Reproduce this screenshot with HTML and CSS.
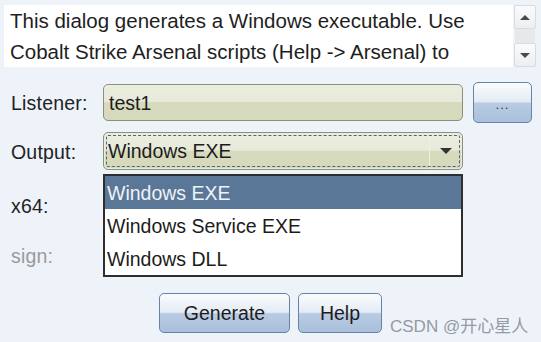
FILE: index.html
```html
<!DOCTYPE html>
<html lang="en">

<head>
    <meta charset="UTF-8">
    <title>Windows Executable</title>
    <link rel="stylesheet" href="styles.css">
</head>

<body>
    <div class="dialog">
        <!-- description -->
        <div class="desc">
            <div class="desc-text">This dialog generates a Windows executable. Use Cobalt Strike Arsenal scripts (Help -&gt; Arsenal) to</div>
            <div class="scrollbar">
                <div class="scroll-btn"><span class="arrow-up"></span></div>
                <div class="scroll-track"></div>
                <div class="scroll-btn"><span class="arrow-down"></span></div>
            </div>
        </div>

        <div class="row row-listener">
            <div class="label">Listener:</div>
            <div class="field">test1</div>
            <button class="btn btn-more">...</button>
        </div>

        <div class="row row-output">
            <div class="label">Output:</div>
            <div class="combo-wrap">
                <div class="combo">
                    <div class="combo-value">Windows EXE</div>
                    <div class="combo-arrow"><span class="arrow-down dark"></span></div>
                </div>
                <!-- open popup list -->
                <ul class="combo-list">
                    <li class="selected">Windows EXE</li>
                    <li>Windows Service EXE</li>
                    <li>Windows DLL</li>
                </ul>
            </div>
        </div>

        <div class="row row-x64">
            <div class="label">x64:</div>
        </div>

        <div class="row row-sign">
            <div class="label disabled">sign:</div>
        </div>

        <div class="buttons">
            <button class="btn btn-generate">Generate</button>
            <button class="btn btn-help">Help</button>
        </div>
    </div>

    <div class="watermark">CSDN @开心星人</div>
</body>

</html>
```

FILE: styles.css
```css
body {
    margin: 0;
    height: 342px;
    background-color: #eef2f9;
    font-family: "Liberation Sans", Arial, sans-serif;
    color: #222222;
    overflow: hidden;
}

.dialog {
    padding: 5px 0 0 4px;
}

.desc {
    display: flex;
    height: 62px;
}

.desc-text {
    width: 503px;
    height: 62px;
    padding: 0 0 0 6px;
    background-color: #ffffff;
    font-size: 20.5px;
    line-height: 31px;
    overflow: hidden;
    color: #1e1e1e;
}

.scrollbar {
    width: 22px;
    margin-left: 1px;
    display: flex;
    flex-direction: column;
}

.scroll-btn {
    height: 22px;
    border: 1px solid #d7dbe2;
    border-radius: 2px;
    background: linear-gradient(#fbfbfc, #eceef1);
    display: flex;
    justify-content: center;
    align-items: center;
}

.scroll-track {
    flex: 1;
    background-color: #e6e8ec;
    margin: 0 1px;
}

.arrow-up {
    width: 0;
    height: 0;
    border-left: 5px solid transparent;
    border-right: 5px solid transparent;
    border-bottom: 5px solid #4a4a4a;
}

.arrow-down {
    width: 0;
    height: 0;
    border-left: 5px solid transparent;
    border-right: 5px solid transparent;
    border-top: 5px solid #4a4a4a;
}

.arrow-down.dark {
    border-left-width: 6px;
    border-right-width: 6px;
    border-top: 6px solid #333333;
}

.row {
    display: flex;
    align-items: center;
}

.label {
    width: 92px;
    padding-left: 7px;
    font-size: 19.5px;
    letter-spacing: 0.2px;
    padding-top: 3px;
    color: #222222;
}

.label.disabled {
    color: #9a9a9a;
}

.row-listener {
    margin-top: 14px;
    height: 42px;
}

.field {
    width: 353px;
    height: 35px;
    padding-left: 5px;
    border: 1px solid #8d9079;
    border-radius: 5px;
    background: linear-gradient(#ebeedf 0%, #e7eadb 48%, #d7dabd 50%, #d6d9bc 100%);
    font-size: 19.5px;
    line-height: 36px;
    color: #1c1c1c;
}

.btn {
    font-family: "Liberation Sans", Arial, sans-serif;
    border: 1px solid #6683a8;
    border-radius: 5px;
    background: linear-gradient(#fafcfe 0%, #e4ebf4 48%, #b9cbe2 52%, #a9bfdb 100%);
    color: #1c1c1c;
    padding: 0;
    cursor: pointer;
}

.btn-more {
    margin-left: 10px;
    width: 59px;
    height: 41px;
    font-size: 13px;
    letter-spacing: 1px;
    padding-top: 4px;
    color: #333333;
}

.row-output {
    margin-top: 9px;
    height: 38px;
}

.combo-wrap {
    position: relative;
}

.combo {
    width: 358px;
    height: 36px;
    border: 1px solid #8d9079;
    border-radius: 5px;
    background: linear-gradient(#ebeedf 0%, #e7eadb 48%, #d7dabd 50%, #d6d9bc 100%);
    display: flex;
    box-shadow: inset 0 0 0 1px #e9ecdd;
    position: relative;
}

.combo::after {
    content: "";
    position: absolute;
    left: 2px;
    top: 2px;
    right: 2px;
    bottom: 2px;
    border: 1px dashed #4d6584;
    border-radius: 2px;
}

.combo-value {
    flex: 1;
    padding-left: 4px;
    font-size: 19.5px;
    line-height: 37px;
    color: #1c1c1c;
}

.combo-arrow {
    width: 32px;
    border-left: 1px solid #eef0e4;
    display: flex;
    justify-content: center;
    align-items: center;
}

.combo-list {
    position: absolute;
    left: 0;
    top: 42px;
    width: 356px;
    margin: 0;
    padding: 0;
    list-style: none;
    background-color: #ffffff;
    border: 2px solid #2e2e2e;
    z-index: 2;
}

.combo-list li {
    height: 33px;
    padding-left: 2px;
    font-size: 19.5px;
    line-height: 34px;
    color: #1c1c1c;
}

.combo-list li.selected {
    background-color: #5b7797;
    color: #eef3f8;
}

.row-x64 {
    margin-top: 18px;
    height: 34px;
}

.row-sign {
    margin-top: 16px;
    height: 34px;
}

.buttons {
    margin-top: 21px;
    display: flex;
    justify-content: center;
    gap: 8px;
    padding-right: 4px;
}

.btn-generate {
    width: 131px;
    height: 40px;
    font-size: 19.5px;
}

.btn-help {
    width: 84px;
    height: 40px;
    font-size: 19.5px;
}

.watermark {
    position: absolute;
    left: 390px;
    top: 312px;
    font-family: "Liberation Sans", "Noto Sans CJK SC", sans-serif;
    font-size: 17px;
    color: #959aa4;
}
```
